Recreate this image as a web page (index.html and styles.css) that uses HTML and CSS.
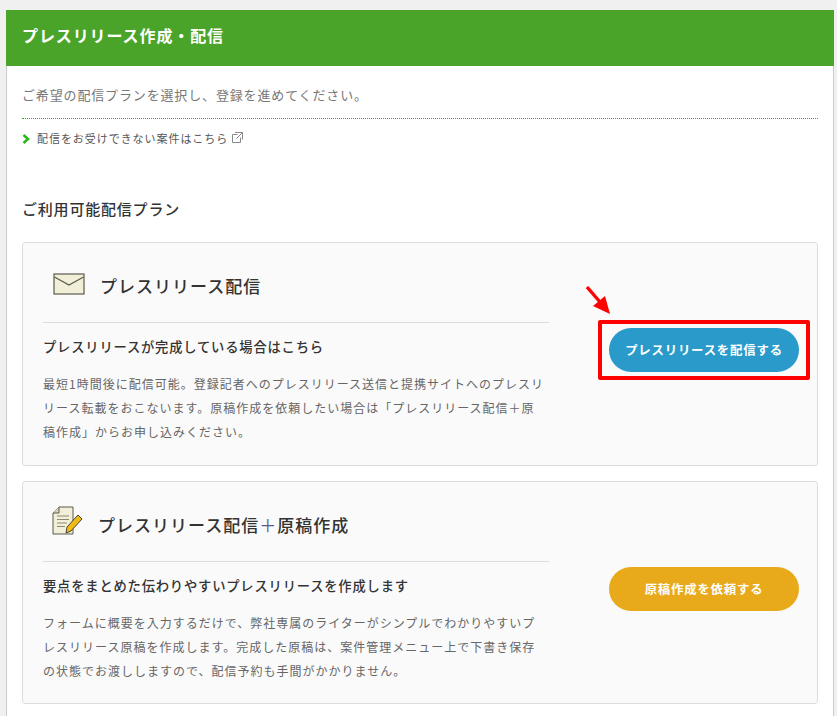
FILE: index.html
```html
<!DOCTYPE html>
<html lang="ja">
<head>
<meta charset="utf-8">
<title>プレスリリース作成・配信</title>
<link rel="stylesheet" href="styles.css">
</head>
<body>
<main class="panel">
  <h1 class="panel-title">プレスリリース作成・配信</h1>
  <div class="panel-body">
    <p class="lead">ご希望の配信プランを選択し、登録を進めてください。</p>
    <p class="note">
      <svg class="chev" width="8" height="10" viewBox="0 0 8 10"><path d="M1.5 1 L6 5 L1.5 9" fill="none" stroke="#2cb81c" stroke-width="2.6"/></svg>
      <span>配信をお受けできない案件はこちら</span>
      <svg class="ext" width="11" height="11" viewBox="0 0 11 11"><path d="M5.5 2.5H.5V10.5H8.5V5.5M3 .5H10.5V7.5M10 1L4.5 6.5" fill="none" stroke="#8a8a8a" stroke-width="1"/></svg>
    </p>
    <h2 class="section-title">ご利用可能配信プラン</h2>

    <section class="plan plan-first">
      <div class="plan-main">
        <div class="plan-head">
          <svg class="icon-mail" width="32" height="22" viewBox="0 0 32 22"><rect x="1" y="1" width="30" height="20" fill="#f2efd9" stroke="#5a5a4c" stroke-width="1.2"/><path d="M1.5 4 L16 12 L30.5 4" fill="none" stroke="#5a5a4c" stroke-width="1.2"/></svg>
          <h3 class="plan-title">プレスリリース配信</h3>
        </div>
        <h4 class="plan-sub">プレスリリースが完成している場合はこちら</h4>
        <p class="plan-text">最短1時間後に配信可能。登録記者へのプレスリリース送信と提携サイトへのプレスリリース転載をおこないます。原稿作成を依頼したい場合は「プレスリリース配信＋原稿作成」からお申し込みください。</p>
      </div>
      <div class="plan-action">
        <svg class="arrow" width="28" height="30" viewBox="0 0 28 30"><path d="M2 2 L15 17" stroke="#f00" stroke-width="3.4" fill="none"/><path d="M8 21 L20 11 L25 29 Z" fill="#f00"/></svg>
        <div class="highlight"><a class="btn btn-blue" href="#">プレスリリースを配信する</a></div>
      </div>
    </section>

    <section class="plan plan-second">
      <div class="plan-main">
        <div class="plan-head">
          <svg class="icon-doc" width="32" height="30" viewBox="0 0 32 30"><path d="M7 1H21V28H1V7Z" fill="#f2efd9" stroke="#5a5a4c" stroke-width="1"/><path d="M7 1V7H1" fill="#d9d6bf" stroke="#5a5a4c" stroke-width="1"/><path d="M5 10H17M5 13.5H17M5 17H15M5 20.5H13" stroke="#8b8a76" stroke-width="1.1"/><path d="M15 21 L26 9 L30 13 L19 25 L14 27Z" fill="#f0bb14" stroke="#4a4436" stroke-width="1"/></svg>
          <h3 class="plan-title">プレスリリース配信<span class="plus">＋</span>原稿作成</h3>
        </div>
        <h4 class="plan-sub">要点をまとめた伝わりやすいプレスリリースを作成します</h4>
        <p class="plan-text">フォームに概要を入力するだけで、弊社専属のライターがシンプルでわかりやすいプレスリリース原稿を作成します。完成した原稿は、案件管理メニュー上で下書き保存の状態でお渡ししますので、配信予約も手間がかかりません。</p>
      </div>
      <div class="plan-action">
        <a class="btn btn-gold" href="#">原稿作成を依頼する</a>
      </div>
    </section>
  </div>
</main>
</body>
</html>
```
FILE: styles.css
```css
* { box-sizing: border-box; }
html, body { height: 716px; overflow: hidden; }
body {
  margin: 0;
  padding: 10px 3px 0 6px;
  background: #f0f0f0;
  font-family: "Noto Sans CJK JP", "Noto Sans", sans-serif;
  color: #333;
  letter-spacing: 0.05em;
}
h1, h2, h3, h4, p { margin: 0; }
.panel {
  background: #fff;
  border-left: 1px solid #ccc;
  border-right: 1px solid #ccc;
  height: 706px;
}
.panel-title {
  margin-left: -1px;
  margin-right: -1px;
  height: 56px;
  padding-left: 16px;
  background: #4ba42a;
  color: #fff;
  font-size: 16px;
  font-weight: 700;
  letter-spacing: 0.9px;
  line-height: 50px;
}
.panel-body { padding: 0 15px; }
.lead {
  height: 53px;
  padding-top: 18px;
  border-bottom: 1px dotted #2fae1e;
  color: #777;
  font-size: 13px;
  letter-spacing: 0.85px;
  line-height: 22px;
}
.note {
  display: flex;
  align-items: center;
  height: 38px;
  color: #555;
  font-size: 11px;
  letter-spacing: 0.95px;
  padding-bottom: 1px;
}
.chev { margin: 2px 7px 0 0; }
.ext { margin-left: 4px; }
.section-title {
  margin-top: 41px;
  font-size: 15px;
  font-weight: 500;
  line-height: 22px;
  color: #333;
}
.plan {
  display: flex;
  background: #fafafa;
  border: 1px solid #ddd;
  border-radius: 3px;
  padding: 0 18px 0 20px;
}
.plan-first { margin-top: 22px; height: 224px; }
.plan-second { margin-top: 15px; height: 223px; }
.plan-main { width: 506px; }
.plan-head {
  display: flex;
  align-items: center;
  height: 80px;
  border-bottom: 1px solid #ddd;
}
.plan-first .icon-mail { margin: 2px 0 0 10px; }
.plan-second .icon-doc { margin: -2px 0 0 9px; }
.plan-title {
  font-size: 17px;
  font-weight: 500;
  letter-spacing: 1px;
  line-height: 24px;
  color: #333;
}
.plan-first .plan-title { margin-left: 15px; margin-top: 6px; }
.plan-second .plan-title { margin-left: 14px; margin-top: 6px; }
.plus { color: #5b5590; font-weight: 400; }
.plan-sub {
  margin-top: 13px;
  font-size: 13.3px;
  font-weight: 500;
  line-height: 22px;
  color: #333;
}
.plan-text {
  margin-top: 14px;
  padding-right: 3px;
  color: #666;
  font-size: 12px;
  letter-spacing: 1px;
  line-height: 24px;
}
.plan-action {
  position: relative;
  margin-left: 60px;
  width: 190px;
}
.plan-first .plan-action { padding-top: 85px; }
.plan-second .plan-action { padding-top: 85px; }
.btn {
  display: block;
  width: 190px;
  height: 44px;
  border-radius: 22px;
  color: #fff;
  font-size: 12.4px;
  font-weight: 700;
  line-height: 44px;
  text-align: center;
  text-decoration: none;
}
.btn-blue { background: #2a9acb; }
.btn-gold { background: #e8aa1a; }
.highlight {
  position: relative;
  margin: -8px -11px 0 -11px;
  padding: 4px 7px;
  width: 212px;
  height: 60px;
  border: 4px solid #f00;
  border-radius: 2px;
}
.arrow {
  position: absolute;
  left: -24px;
  top: 42px;
}
```
